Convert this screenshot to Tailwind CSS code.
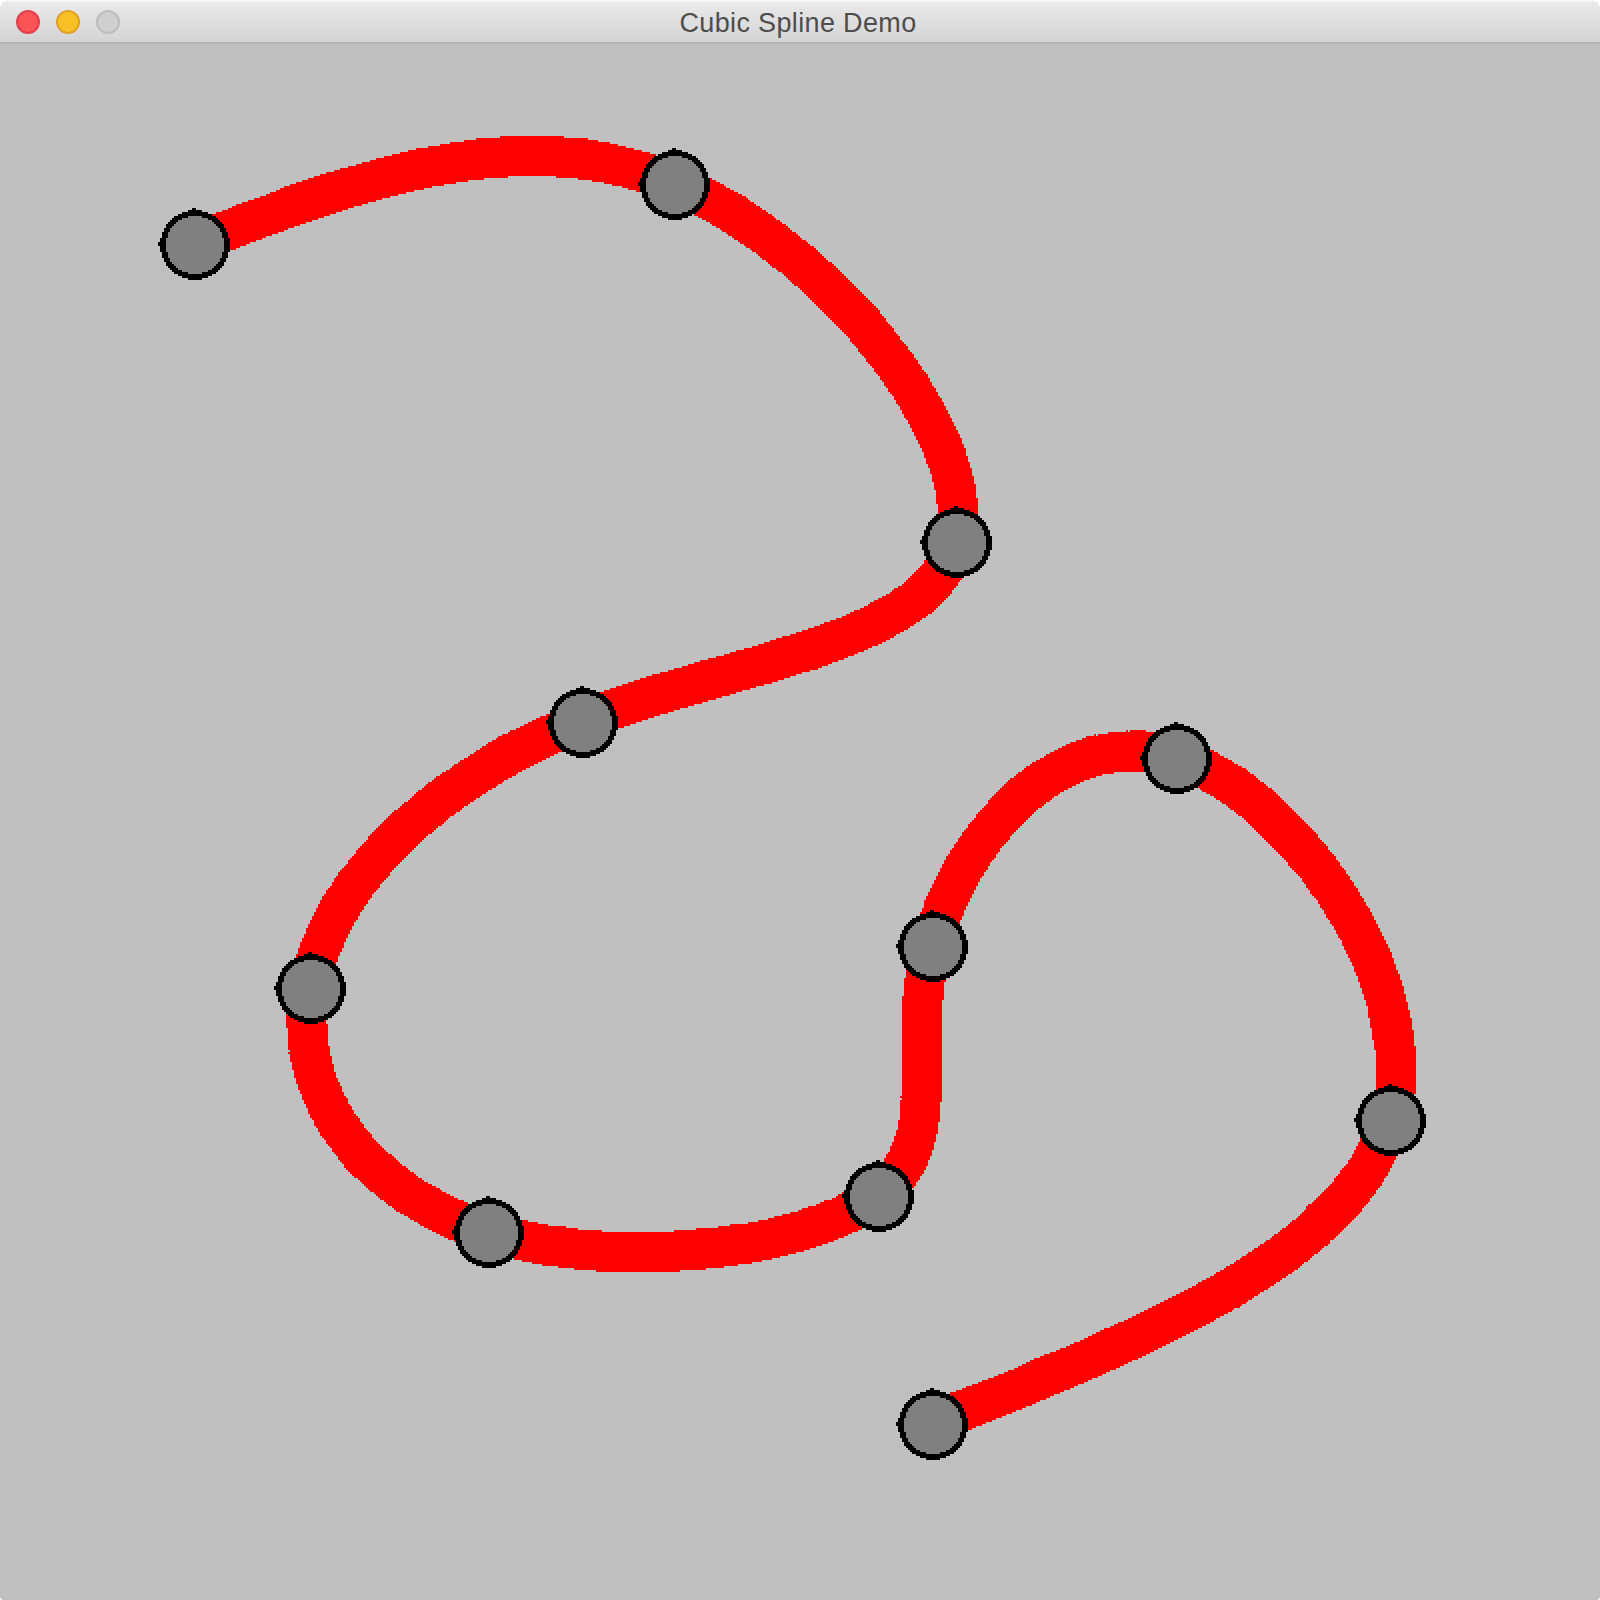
<!DOCTYPE html>
<html lang="en">
<head>
<meta charset="utf-8">
<title>Cubic Spline Demo</title>
<script src="https://cdn.jsdelivr.net/npm/@tailwindcss/browser@4"></script>
</head>
<body class="bg-white">
<main class="flex h-[1600px] w-[1600px] flex-col overflow-hidden rounded-t-[10px] rounded-b-[4px] bg-[#c0c0c0]">
  <header class="grid h-11 shrink-0 grid-cols-[1fr_auto_1fr] items-center border-b-2 border-[#b1b1b1] bg-linear-to-b from-[#ebebeb] to-[#d4d4d4] px-4 shadow-[inset_0_2px_0_#f5f5f5]">
    <div class="flex gap-4 pt-0.5">
      <span class="size-6 rounded-full border-2 border-[#e2404c] bg-[#fc5357]"></span>
      <span class="size-6 rounded-full border-2 border-[#dfa023] bg-[#fac127]"></span>
      <span class="size-6 rounded-full border-2 border-[#bdbdbd] bg-[#cfcfcf]"></span>
    </div>
    <h1 class="pt-1 pr-1 font-['Liberation_Sans',Arial,sans-serif] text-[27px] leading-8 tracking-[0.35px] text-[#4d4d4d]">Cubic Spline Demo</h1>
  </header>
  <canvas id="plot" width="800" height="778" class="block h-[1556px] w-[1600px] shrink-0 [image-rendering:pixelated]"></canvas>
</main>
<script>
const P = [[194.5,244.5],[674.5,184.5],[956.5,542.5],[582.5,722.5],[310.5,988.5],[488.5,1232.5],[878.5,1196.5],[932.5,946.5],[1176.5,758.5],[1390.5,1120.5],[932.5,1424.5]];
// Natural cubic spline: knot derivatives from the tridiagonal system
function slopes(v) {
  const n = v.length - 1, c = [0.5], d = [1.5 * (v[1] - v[0])];
  for (let i = 1; i <= n; i++) {
    const b = i < n ? 4 : 2;
    const r = 3 * (v[Math.min(i + 1, n)] - v[i - 1]);
    const m = 1 / (b - c[i - 1]);
    c[i] = m;
    d[i] = (r - d[i - 1]) * m;
  }
  for (let i = n - 1; i >= 0; i--) d[i] -= c[i] * d[i + 1];
  return d;
}
const X = slopes(P.map(p => p[0])), Y = slopes(P.map(p => p[1]));
function at(p, q, m, n, t) {
  const u = t * t, w = u * t;
  return (2*w - 3*u + 1) * p + (w - 2*u + t) * m + (3*u - 2*w) * q + (w - u) * n;
}
const g = document.getElementById('plot').getContext('2d');
// Fill every 2px cell of the box whose centre passes the test; no antialiasing
function fill(x0, y0, x1, y1, colour, test) {
  g.fillStyle = colour;
  for (let j = Math.floor((y0 - 44) / 2); j <= (y1 - 44) / 2; j++)
    for (let i = Math.floor(x0 / 2); i <= x1 / 2; i++)
      if (test(2 * i + 1, 2 * j + 45)) g.fillRect(i, j, 1, 1);
}
// Stroke the spline as separate thick segments, each with short square caps
function stroke(steps, half, cap, snap) {
  for (let i = 0; i < P.length - 1; i++) {
    let prev = null;
    for (let k = 0; k <= steps; k++) {
      const t = k / steps;
      const x = snap(at(P[i][0], P[i+1][0], X[i], X[i+1], t));
      const y = snap(at(P[i][1], P[i+1][1], Y[i], Y[i+1], t) - 0.4);
      if (prev) {
        const [a, b] = prev, len = Math.hypot(x - a, y - b);
        if (!len) continue;
        const ux = (x - a) / len, uy = (y - b) / len;
        fill(Math.min(a, x) - 30, Math.min(b, y) - 30, Math.max(a, x) + 30, Math.max(b, y) + 30, '#f00', (px, py) => {
          const s = (px - a) * ux + (py - b) * uy;
          return s >= -cap && s <= len + cap && Math.abs((py - b) * ux - (px - a) * uy) <= half;
        });
      }
      prev = [x, y];
    }
  }
}
stroke(28, 20, 2, v => v - 0.8);
stroke(40, 20, 1, v => 2 * Math.floor(v / 2));
for (const [x, y] of P) {
  const disc = r => (px, py) => Math.hypot(px - x - 0.5, py - y - 0.5) <= r;
  fill(x - 40, y - 40, x + 40, y + 40, '#000', disc(34.8));
  fill(x - 40, y - 40, x + 40, y + 40, '#808080', disc(29));
  g.fillStyle = '#000';
  g.fillRect(Math.floor((x - 1) / 2), Math.floor((y - 36 - 44) / 2), 2, 2);
  g.fillRect(Math.floor((x - 36) / 2), Math.floor((y - 1 - 44) / 2), 2, 2);
}
</script>
</body>
</html>
